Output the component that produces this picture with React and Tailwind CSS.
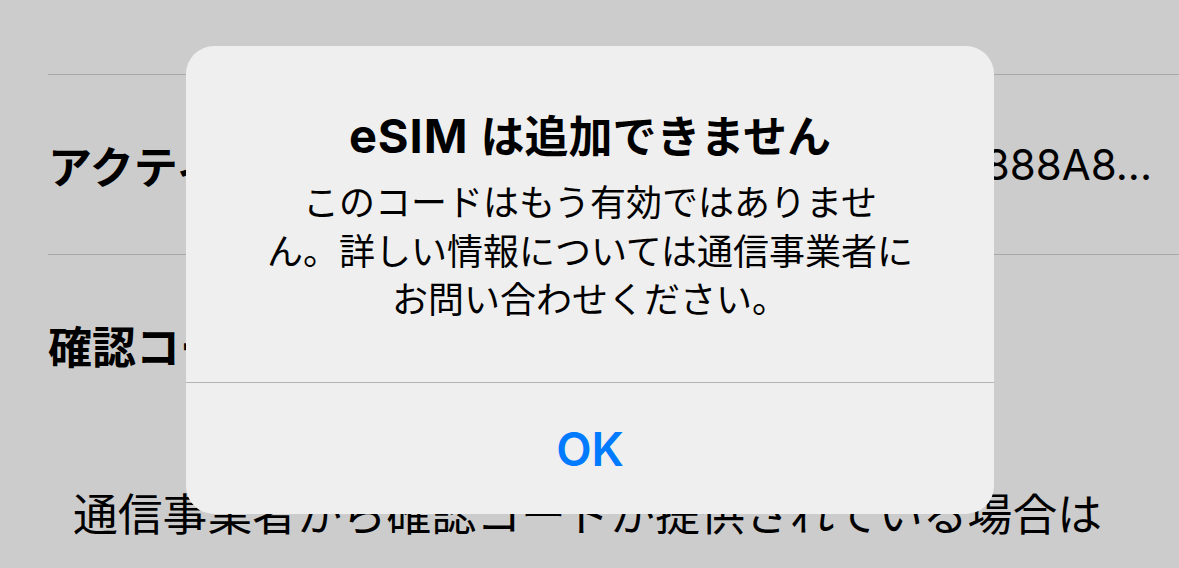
export default function App() {
  return (
    <div className="relative w-[1179px] h-[568px] overflow-hidden bg-[#cccccc] text-black font-['Inter','Noto_Sans_CJK_JP',sans-serif]">
      <div className="pt-[74px]">
        <div className="ml-[48px] border-t border-[#a8a8a8]">
          <div className="flex h-[179px] items-center justify-between pr-[27px]">
            <span className="whitespace-nowrap text-[44px] leading-[52px] font-bold font-['Noto_Sans_CJK_JP',sans-serif]">
              アクティベーションコード
            </span>
            <span className="whitespace-nowrap text-[42px] leading-[52px]">3888A8...</span>
          </div>
        </div>
        <div className="ml-[48px] border-t border-[#a8a8a8]">
          <div className="flex h-[180px] items-center">
            <span className="whitespace-nowrap text-[44px] leading-[52px] font-bold font-['Noto_Sans_CJK_JP',sans-serif]">
              確認コード
            </span>
          </div>
        </div>
        <p className="mt-[50px] pl-[73px] whitespace-nowrap text-[44.8px] leading-[53px] font-['Noto_Sans_CJK_JP',sans-serif]">
          通信事業者から確認コードが提供されている場合は
        </p>
      </div>

      <div className="absolute left-[186px] top-[46px] flex h-[468px] w-[808px] flex-col rounded-[28px] bg-[#efefef]">
        <div className="flex h-[336px] flex-col items-center pt-[63px]">
          <h2 className="whitespace-nowrap text-[44px] leading-[50px] font-bold">
            <span className="text-[47px] tracking-[0.02em] font-['Inter',sans-serif]">eSIM</span>
            <span className="ml-[12px] font-['Noto_Sans_CJK_JP',sans-serif]">は追加できません</span>
          </h2>
          <p className="mt-[14px] whitespace-nowrap text-center text-[36px] leading-[48.5px] font-['Noto_Sans_CJK_JP',sans-serif]">
            このコードはもう有効ではありませ
            <br />
            ん。詳しい情報については通信事業者に
            <br />
            お問い合わせください。
          </p>
        </div>
        <div className="flex flex-1 items-center justify-center border-t border-[#b3b3b3]">
          <span className="text-[46px] leading-[56px] font-semibold text-[#007aff] font-['Inter',sans-serif]">OK</span>
        </div>
      </div>
    </div>
  );
}
